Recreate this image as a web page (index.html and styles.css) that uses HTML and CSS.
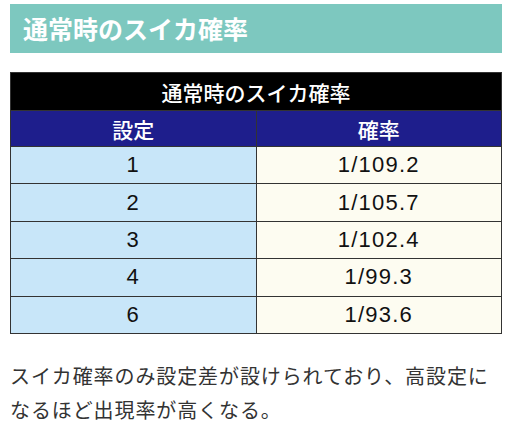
FILE: index.html
```html
<!DOCTYPE html>
<html lang="ja">
<head>
  <meta charset="UTF-8" />
  <title>通常時のスイカ確率</title>
  <link rel="stylesheet" href="styles.css">
</head>
<body>
  <h2 class="section-title">通常時のスイカ確率</h2>

  <table class="rate-table">
    <tr class="caption-row">
      <th colspan="2">通常時のスイカ確率</th>
    </tr>
    <tr class="head-row">
      <th>設定</th>
      <th>確率</th>
    </tr>
    <tr><td class="set">1</td><td class="rate">1/109.2</td></tr>
    <tr><td class="set">2</td><td class="rate">1/105.7</td></tr>
    <tr><td class="set">3</td><td class="rate">1/102.4</td></tr>
    <tr><td class="set">4</td><td class="rate">1/99.3</td></tr>
    <tr><td class="set">6</td><td class="rate">1/93.6</td></tr>
  </table>

  <p class="note">スイカ確率のみ設定差が設けられており、高設定になるほど出現率が高くなる。</p>
</body>
</html>
```

FILE: styles.css
```css
* {
  box-sizing: border-box;
  margin: 0;
  padding: 0;
}

body {
  font-family: "Noto Sans CJK JP", "Noto Sans", sans-serif;
  color: #333;
  background: #fff;
  padding: 4px 10px 0;
}

/* Section heading band */
.section-title {
  background: #7dc8bf;
  color: #fff;
  font-size: 25px;
  font-weight: bold;
  line-height: 49px;
  height: 49px;
  padding-left: 13px;
}

/* Table */
.rate-table {
  width: 492px;
  margin-top: 19px;
  border-collapse: collapse;
  font-family: "Liberation Sans", "Noto Sans CJK JP", sans-serif;
  font-size: 22px;
  letter-spacing: 1.2px;
  text-align: center;
}

.rate-table th,
.rate-table td {
  border: 1px solid #333;
  width: 50%;
  font-weight: normal;
}

.caption-row th {
  background: #000;
  color: #fff;
  height: 38px;
  font-family: "Noto Sans CJK JP", sans-serif;
  font-size: 21px;
  font-weight: 500;
  letter-spacing: 0;
}

.head-row th {
  background: #1e1e8c;
  color: #fff;
  height: 36px;
  font-family: "Noto Sans CJK JP", sans-serif;
  font-size: 21px;
  font-weight: 500;
  letter-spacing: 0;
}

.rate-table td {
  height: 37.4px;
  color: #111;
}

.rate-table td.set {
  background: #c8e6f9;
}

.rate-table td.rate {
  background: #fdfcf1;
}

/* Note paragraph */
.note {
  margin-top: 25px;
  font-size: 20px;
  letter-spacing: 0.9px;
  line-height: 34px;
  color: #333;
}
```
